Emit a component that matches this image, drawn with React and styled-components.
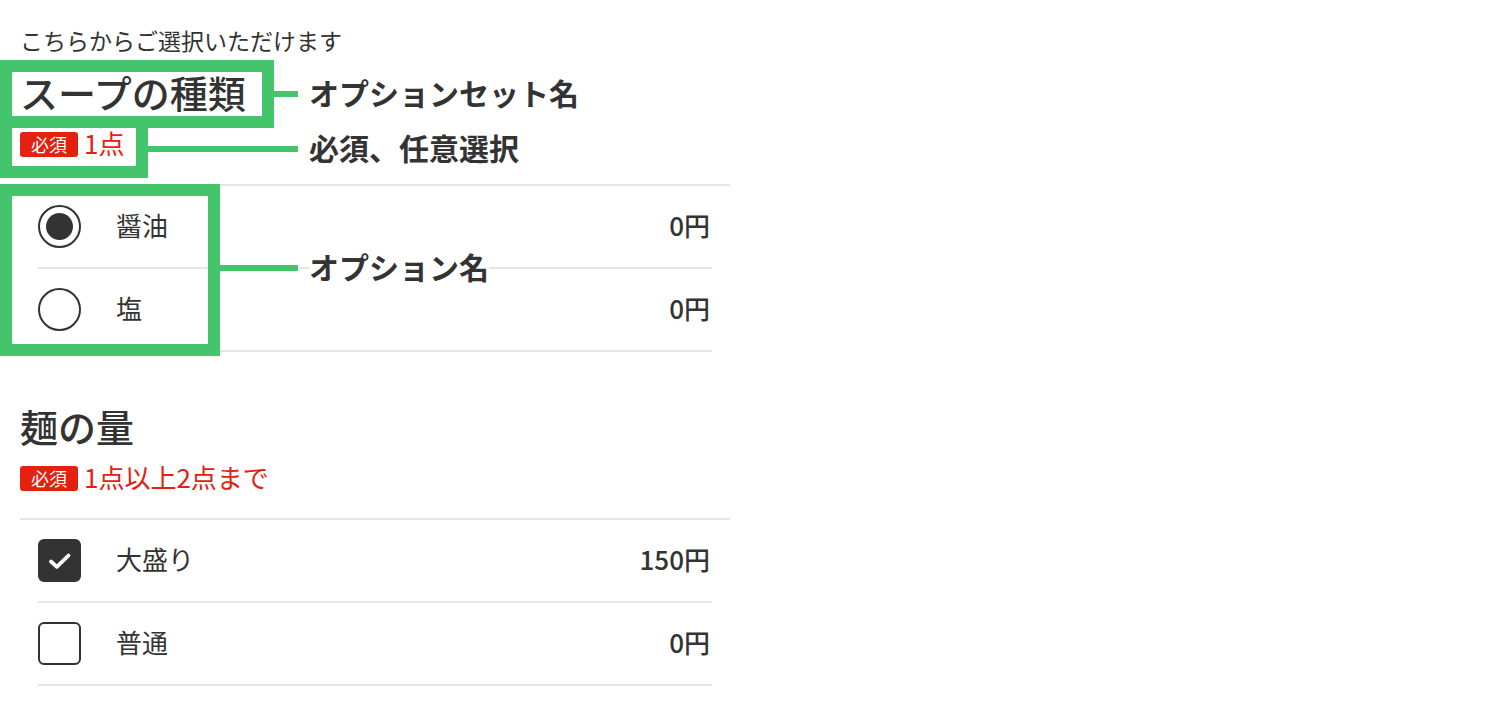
import styled, { createGlobalStyle } from 'styled-components'

const GlobalStyle = createGlobalStyle`
    body {
        margin: 0;
        background: #fff;
        color: #333;
        font-family: "Noto Sans CJK JP", "Noto Sans", sans-serif;
    }
`

const Page = styled.div`
    position: relative;
    width: 710px;
    padding: 24px 0 40px 20px;
`

const Intro = styled.p`
    margin: 0;
    font-size: 23px;
    line-height: 33px;
`

const Section = styled.section`
    margin-top: ${(p) => (p.$first ? '10px' : '49px')};
`

const Title = styled.h2`
    margin: 0;
    font-size: 38px;
    font-weight: 500;
    line-height: 50px;
    padding-bottom: 2px;
`

const Requirement = styled.div`
    display: flex;
    align-items: center;
    gap: 6px;
    margin-top: 7px;
    height: 36px;
`

const Badge = styled.span`
    display: inline-flex;
    align-items: center;
    justify-content: center;
    width: 58px;
    height: 25px;
    border-radius: 3px;
    background: #e4200f;
    color: #fff;
    font-size: 18px;
    line-height: 1;
    padding-bottom: 1px;
    box-sizing: border-box;
`

const Limit = styled.span`
    color: #e4200f;
    font-size: 26px;
    line-height: 36px;
    padding-bottom: 3px;
`

const List = styled.ul`
    list-style: none;
    margin: 22px 0 0;
    padding: 0;
    border-top: 2px solid #e5e5e5;
`

const Row = styled.li`
    display: flex;
    align-items: center;
    height: 81px;
    margin: 0 18px;
    border-bottom: 2px solid #e5e5e5;
    font-size: 26px;
`

const Radio = styled.span`
    box-sizing: border-box;
    display: flex;
    align-items: center;
    justify-content: center;
    width: 43px;
    height: 43px;
    border: 2px solid #333;
    border-radius: 50%;

    &::after {
        content: '';
        display: ${(p) => (p.$on ? 'block' : 'none')};
        width: 27px;
        height: 27px;
        border-radius: 50%;
        background: #333;
    }
`

const Check = styled.span`
    box-sizing: border-box;
    display: flex;
    align-items: center;
    justify-content: center;
    width: 43px;
    height: 43px;
    border: 2px solid #333;
    border-radius: 6px;
    background: ${(p) => (p.$on ? '#333' : '#fff')};
`

const Label = styled.span`
    margin-left: 35px;
    padding-bottom: 4px;
`

const Price = styled.span`
    margin-left: auto;
    margin-right: 2px;
    padding-bottom: 4px;
    font-weight: 500;
`

const Frame = styled.div`
    position: absolute;
    box-sizing: border-box;
    left: 0;
    top: ${(p) => p.$top}px;
    width: ${(p) => p.$w}px;
    height: ${(p) => p.$h}px;
    border: 12px solid #44c46b;
    pointer-events: none;
`

const Callout = styled.div`
    position: absolute;
    left: ${(p) => p.$from}px;
    top: ${(p) => p.$y - 20}px;
    display: flex;
    align-items: center;
    height: 40px;
`

const Leader = styled.span`
    width: ${(p) => p.$len}px;
    height: 6px;
    background: #44c46b;
`

const Note = styled.span`
    margin-left: 11px;
    padding-bottom: 5px;
    font-size: 30px;
    font-weight: 700;
    line-height: 36px;
    color: #333;
    background: #fff;
`

const CheckMark = () => (
    <svg width="28" height="28" viewBox="0 0 28 28">
        <path d="M5 14.5l5.8 5.3L22.5 8.5" fill="none" stroke="#fff" strokeWidth="3.8" strokeLinecap="round" strokeLinejoin="round" />
    </svg>
)

const sets = [
    {
        title: 'スープの種類',
        limit: '1点',
        multi: false,
        options: [
            { name: '醤油', price: '0円', on: true },
            { name: '塩', price: '0円', on: false },
        ],
    },
    {
        title: '麺の量',
        limit: '1点以上2点まで',
        multi: true,
        options: [
            { name: '大盛り', price: '150円', on: true },
            { name: '普通', price: '0円', on: false },
        ],
    },
]

function App() {
    return (
        <>
            <GlobalStyle />
            <Page>
                <Intro>こちらからご選択いただけます</Intro>
                {sets.map((set, i) => (
                    <Section key={set.title} $first={i === 0}>
                        <Title>{set.title}</Title>
                        <Requirement>
                            <Badge>必須</Badge>
                            <Limit>{set.limit}</Limit>
                        </Requirement>
                        <List>
                            {set.options.map((opt) => (
                                <Row key={opt.name}>
                                    {set.multi ? (
                                        <Check $on={opt.on}>{opt.on && <CheckMark />}</Check>
                                    ) : (
                                        <Radio $on={opt.on} />
                                    )}
                                    <Label>{opt.name}</Label>
                                    <Price>{opt.price}</Price>
                                </Row>
                            ))}
                        </List>
                    </Section>
                ))}

                <Frame $top={60} $w={274} $h={68} />
                <Frame $top={116} $w={148} $h={62} />
                <Frame $top={184} $w={220} $h={172} />

                <Callout $from={274} $y={94}>
                    <Leader $len={24} />
                    <Note>オプションセット名</Note>
                </Callout>
                <Callout $from={148} $y={149}>
                    <Leader $len={150} />
                    <Note>必須、任意選択</Note>
                </Callout>
                <Callout $from={220} $y={268}>
                    <Leader $len={78} />
                    <Note>オプション名</Note>
                </Callout>
            </Page>
        </>
    )
}

export default App
